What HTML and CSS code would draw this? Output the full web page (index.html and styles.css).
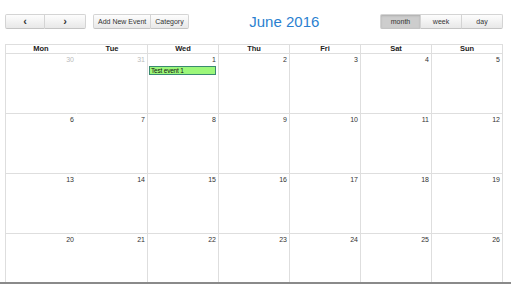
FILE: index.html
```html
<!DOCTYPE html>
<html lang="en">
<head>
    <meta charset="UTF-8">
    <meta name="viewport" content="width=device-width, initial-scale=1.0">
    <title>Calendar</title>
    <link rel="stylesheet" href="styles.css">
</head>
<body>
    <div class="page">
        <div class="toolbar">
            <div class="group">
                <button class="btn nav">&lsaquo;</button>
                <button class="btn nav">&rsaquo;</button>
            </div>
            <div class="group">
                <button class="btn">Add New Event</button>
                <button class="btn">Category</button>
            </div>
            <h2 class="title">June 2016</h2>
            <div class="group">
                <button class="btn view active">month</button>
                <button class="btn view">week</button>
                <button class="btn view">day</button>
            </div>
        </div>

        <div class="cal">
            <div class="head first">Mon</div>
            <div class="head">Tue</div>
            <div class="head">Wed</div>
            <div class="head">Thu</div>
            <div class="head">Fri</div>
            <div class="head">Sat</div>
            <div class="head">Sun</div>

            <div class="day first other"><span class="num">30</span></div>
            <div class="day other"><span class="num">31</span></div>
            <div class="day"><span class="num">1</span><div class="event">Test event 1</div></div>
            <div class="day"><span class="num">2</span></div>
            <div class="day"><span class="num">3</span></div>
            <div class="day"><span class="num">4</span></div>
            <div class="day"><span class="num">5</span></div>

            <div class="day first"><span class="num">6</span></div>
            <div class="day"><span class="num">7</span></div>
            <div class="day"><span class="num">8</span></div>
            <div class="day"><span class="num">9</span></div>
            <div class="day"><span class="num">10</span></div>
            <div class="day"><span class="num">11</span></div>
            <div class="day"><span class="num">12</span></div>

            <div class="day first"><span class="num">13</span></div>
            <div class="day"><span class="num">14</span></div>
            <div class="day"><span class="num">15</span></div>
            <div class="day"><span class="num">16</span></div>
            <div class="day"><span class="num">17</span></div>
            <div class="day"><span class="num">18</span></div>
            <div class="day"><span class="num">19</span></div>

            <div class="day first"><span class="num">20</span></div>
            <div class="day"><span class="num">21</span></div>
            <div class="day"><span class="num">22</span></div>
            <div class="day"><span class="num">23</span></div>
            <div class="day"><span class="num">24</span></div>
            <div class="day"><span class="num">25</span></div>
            <div class="day"><span class="num">26</span></div>
        </div>
    </div>
    <div class="bottom-bar"></div>
</body>
</html>
```

FILE: styles.css
```css
body {
    margin: 0;
    font-family: "Liberation Sans", Arial, sans-serif;
    background: #fff;
    color: #333;
}
.page {
    height: 282px;
    overflow: hidden;
    padding: 0 8px 0 5px;
}
.toolbar {
    display: flex;
    align-items: center;
    gap: 7px;
    padding-top: 14px;
    height: 15px;
    margin-bottom: 15px;
}
.group {
    display: flex;
}
.btn {
    font-family: "Liberation Sans", Arial, sans-serif;
    font-size: 7px;
    color: #333;
    height: 15px;
    padding: 0 4px;
    margin: 0;
    background: linear-gradient(#fdfdfd, #e8e8e8);
    border: 1px solid #d4d4d4;
    border-bottom-color: #c4c4c4;
    border-left: none;
    cursor: pointer;
}
.group .btn:first-child {
    border-left: 1px solid #d4d4d4;
    border-radius: 2px 0 0 2px;
}
.group .btn:last-child {
    border-radius: 0 2px 2px 0;
}
.nav {
    width: 41px;
    font-size: 11px;
    line-height: 11px;
    font-weight: bold;
}
.group .nav:first-child {
    width: 40px;
}
.view {
    width: 41px;
}
.active {
    background: #cdcdcd;
    box-shadow: inset 0 1px 2px rgba(0,0,0,0.15);
}
.title {
    flex: 1;
    margin: 0;
    text-align: center;
    font-size: 15px;
    font-weight: normal;
    color: #2b7fd0;
}
.cal {
    display: grid;
    grid-template-columns: repeat(7, 71px);
    border-top: 1px solid #dedede;
    border-left: 1px solid #dedede;
}
.head {
    height: 8px;
    line-height: 8px;
    font-size: 7.5px;
    font-weight: bold;
    text-align: center;
    color: #222;
    border-right: 1px solid #dedede;
    border-bottom: 1px solid #dedede;
}
.head.first,
.day.first {
    border-right-color: #fff;
}
.day {
    height: 59px;
    border-right: 1px solid #dedede;
    border-bottom: 1px solid #dedede;
    font-size: 7px;
}
.num {
    display: block;
    text-align: right;
    padding: 2px 2px 0 0;
    line-height: 8px;
    color: #333;
}
.other .num {
    color: #bbb;
}
.event {
    margin: 2px 2px 0 1px;
    height: 7px;
    line-height: 7px;
    padding: 0 1px;
    font-size: 6.5px;
    letter-spacing: -0.2px;
    color: #111;
    background: #9cf77a;
    border: 1px solid #3a8a70;
    white-space: nowrap;
    overflow: hidden;
}
.bottom-bar {
    height: 2px;
    background: #8a8a8a;
}
```
